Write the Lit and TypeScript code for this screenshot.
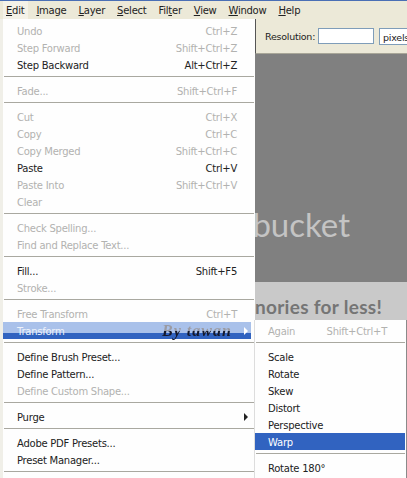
import { LitElement, html, css, nothing } from "lit";
import { customElement } from "lit/decorators.js";

type Row = { t: string; k?: string; on?: boolean; sub?: boolean; sep?: boolean; hi?: boolean };

const menu: Row[] = [
  { t: "Undo", k: "Ctrl+Z" },
  { t: "Step Forward", k: "Shift+Ctrl+Z" },
  { t: "Step Backward", k: "Alt+Ctrl+Z", on: true },
  { t: "", sep: true },
  { t: "Fade...", k: "Shift+Ctrl+F" },
  { t: "", sep: true },
  { t: "Cut", k: "Ctrl+X" },
  { t: "Copy", k: "Ctrl+C" },
  { t: "Copy Merged", k: "Shift+Ctrl+C" },
  { t: "Paste", k: "Ctrl+V", on: true },
  { t: "Paste Into", k: "Shift+Ctrl+V" },
  { t: "Clear" },
  { t: "", sep: true },
  { t: "Check Spelling..." },
  { t: "Find and Replace Text..." },
  { t: "", sep: true },
  { t: "Fill...", k: "Shift+F5", on: true },
  { t: "Stroke..." },
  { t: "", sep: true },
  { t: "Free Transform", k: "Ctrl+T" },
  { t: "Transform", sub: true, hi: true },
  { t: "", sep: true },
  { t: "Define Brush Preset...", on: true },
  { t: "Define Pattern...", on: true },
  { t: "Define Custom Shape..." },
  { t: "", sep: true },
  { t: "Purge", sub: true, on: true },
  { t: "", sep: true },
  { t: "Adobe PDF Presets...", on: true },
  { t: "Preset Manager...", on: true },
  { t: "", sep: true },
];

const submenu: Row[] = [
  { t: "Again", k: "Shift+Ctrl+T" },
  { t: "", sep: true },
  { t: "Scale", on: true },
  { t: "Rotate", on: true },
  { t: "Skew", on: true },
  { t: "Distort", on: true },
  { t: "Perspective", on: true },
  { t: "Warp", on: true, hi: true },
  { t: "", sep: true },
  { t: "Rotate 180°", on: true },
];

const bar: [string, string, string][] = [
  ["", "E", "dit"],
  ["", "I", "mage"],
  ["", "L", "ayer"],
  ["", "S", "elect"],
  ["Fil", "t", "er"],
  ["", "V", "iew"],
  ["", "W", "indow"],
  ["", "H", "elp"],
];

@customElement("app-root")
export class AppRoot extends LitElement {
  static styles = css`
    :host {
      display: block;
      width: 407px;
      height: 478px;
      overflow: hidden;
      position: relative;
      font-family: "DejaVu Sans", sans-serif;
      font-size: 10px;
      letter-spacing: -0.25px;
      color: #111;
      background: #808080;
    }
    .titlestrip { height: 1px; background: #4a6fb5; }
    .bar {
      height: 18px;
      background: #ece9d8;
      display: flex;
      align-items: center;
      padding-left: 3px;
      color: #222;
    }
    .bar span.item { padding: 0 5px 0 7px; line-height: 19px; white-space: nowrap; }
    .bar span.item:first-child { background: #f4f2e8; padding: 0 4px 0 3px; margin-right: 1px; }
    .bar u { text-underline-offset: 1px; }
    .main { display: flex; height: 459px; }
    .menu {
      width: 255px;
      flex: none;
      background: #fefefe;
      border-left: 3px solid #f0efe8;
      box-sizing: border-box;
      padding-top: 3px;
      height: 459px;
      overflow: hidden;
    }
    .right { flex: 1; display: flex; flex-direction: column; min-width: 0; }
    .opts {
      height: 35px;
      background: #ece9d8;
      display: flex;
      align-items: center;
      border-left: 1px solid #555;
      border-bottom: 1px solid #a8a698;
      box-sizing: border-box;
      padding-left: 9px;
      gap: 3px;
      white-space: nowrap;
      overflow: hidden;
      font-size: 9.5px;
      color: #222;
    }
    .opts i.in {
      display: block;
      width: 54px;
      height: 14px;
      background: #fff;
      border: 1px solid #7f9db9;
      flex: none;
    }
    .opts b.sel {
      font-weight: 400;
      background: #fff;
      border: 1px solid #7f9db9;
      height: 15px;
      line-height: 17px;
      padding-left: 3px;
      width: 60px;
      flex: none;
      margin-left: 2px;
    }
    .canvas { height: 228px; background: #808080; flex: none; position: relative; overflow: hidden; }
    .band {
      height: 38px;
      flex: none;
      background: #c9c9c9;
      color: #757575;
      font-weight: 700;
      font-size: 19px;
      font-family: "Lato", sans-serif;
      box-sizing: border-box;
      padding-top: 13px;
      line-height: 24px;
      white-space: nowrap;
      overflow: hidden;
      letter-spacing: 0.3px;
    }
    .sub {
      flex: 1;
      background: #fefefe;
      padding-top: 2px;
      margin-left: -1px;
      border-left: 1px solid #ddd;
      border-right: 1px solid #8a8a8a;
    }
    .row {
      height: 17px;
      line-height: 19px;
      display: flex;
      justify-content: space-between;
      padding: 0 18px 0 14px;
      color: #b2b2b0;
      white-space: nowrap;
      position: relative;
    }
    .row.on { color: #222; }
    .sub .row { padding: 0 19px 0 13px; }
    .sep {
      height: 9px;
      box-sizing: border-box;
      padding-top: 3px;
      padding-right: 1px;
    }
    .sep::before { content: ""; display: block; height: 1px; background: #a9a8a0; margin: 0 0 0 1px; }
    .row .arrow {
      position: absolute;
      right: 7px;
      top: 5px;
      width: 0;
      height: 0;
      border-left: 4px solid #222;
      border-top: 4px solid transparent;
      border-bottom: 4px solid transparent;
    }
    .menu .row.hi {
      color: #eef2fb;
      background: linear-gradient(#a9c1ea 0 11px, #3163c0 11px);
      margin-right: 4px;
      padding-right: 14px;
    }
    .menu .row.hi .arrow { border-left-color: #fff; right: 3px; }
    .sub .row.hi { background: #3163c0; color: #fff; margin-right: 1px; }
    .sig {
      position: absolute;
      left: 162px;
      top: 322px;
      font: italic 700 16px "Liberation Serif", serif;
      letter-spacing: 1px;
      white-space: nowrap;
      color: transparent;
      background: linear-gradient(#9a9aa2 0 9px, #14182c 9px);
      -webkit-background-clip: text;
      background-clip: text;
    }
    .mark {
      position: absolute;
      right: 57px;
      top: 150px;
      font: 400 33px "Lato", sans-serif;
      letter-spacing: 0;
      color: #c4c4c4;
      white-space: nowrap;
    }
  `;

  private rows(list: Row[]) {
    return list.map((r) =>
      r.sep
        ? html`<div class="sep"></div>`
        : html`<div class="row ${r.on ? "on" : ""} ${r.hi ? "hi" : ""}">
            <span>${r.t}</span>${r.k ? html`<span>${r.k}</span>` : nothing}
            ${r.sub ? html`<i class="arrow"></i>` : nothing}
          </div>`
    );
  }

  render() {
    return html`
      <div class="titlestrip"></div>
      <div class="bar">
        ${bar.map(([a, u, b]) => html`<span class="item">${a}<u>${u}</u>${b}</span>`)}
      </div>
      <div class="main">
        <div class="menu">${this.rows(menu)}</div>
        <div class="right">
          <div class="opts"><span>Resolution:</span><i class="in"></i><b class="sel">pixels/inch</b></div>
          <div class="canvas"><div class="mark">photobucket</div></div>
          <div class="band">nories for less!</div>
          <div class="sub">${this.rows(submenu)}</div>
        </div>
      </div>
      <div class="sig">By tawan</div>
    `;
  }
}
